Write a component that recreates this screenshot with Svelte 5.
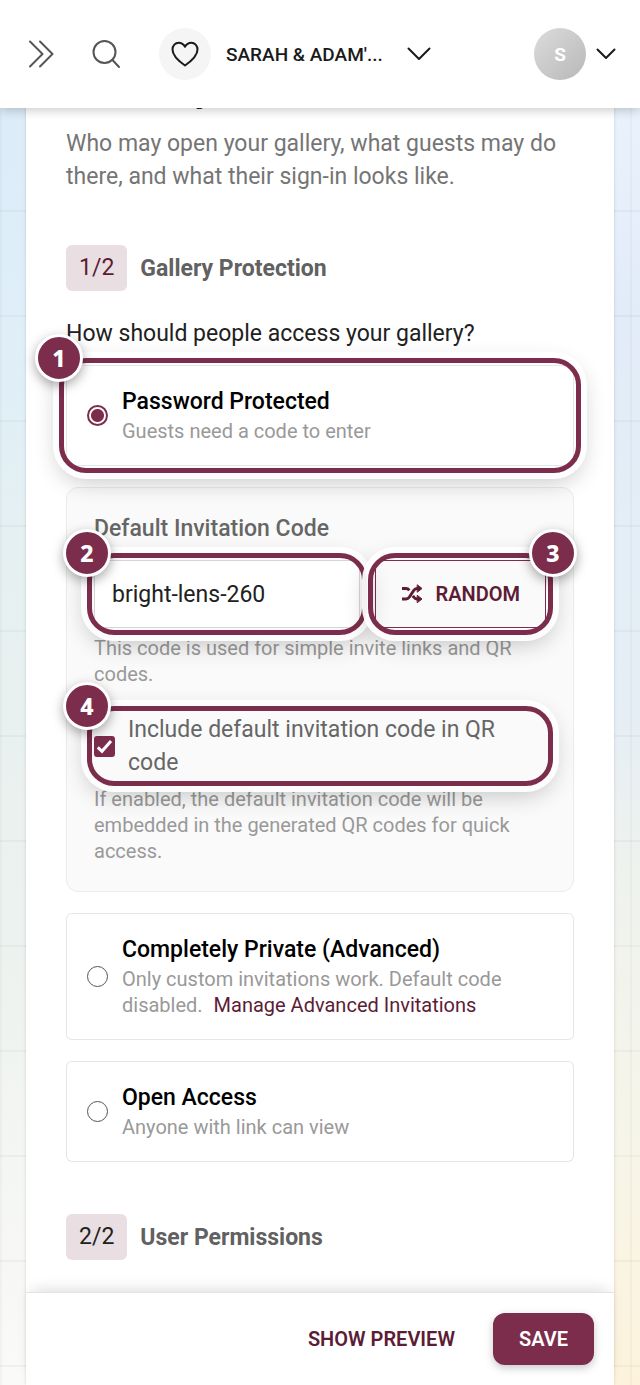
<script>
let access = $state('password');
let code = $state('bright-lens-260');
let includeCode = $state(true);

const words = ['bright', 'golden', 'quiet', 'happy', 'velvet'];
const things = ['lens', 'frame', 'flash', 'album', 'print'];

function pick(list) {
  return list[Math.floor(Math.random() * list.length)];
}

function randomCode() {
  code = `${pick(words)}-${pick(things)}-${100 + Math.floor(Math.random() * 900)}`;
}
</script>

{#snippet marker(n, side)}
  <span class="ring" aria-hidden="true"></span>
  <span class="marker {side}">{n}</span>
{/snippet}

<div class="page">
  <header>
    <button class="icon menu" aria-label="Open menu">
      <svg width="28" height="28" viewBox="0 0 28 28"><path d="M2 1.500 14.500 14 2 26.500M12 1.500 24.500 14 12 26.500" /></svg>
    </button>
    <button class="icon search" aria-label="Search">
      <svg width="30" height="30" viewBox="0 0 30 30"><circle cx="13.500" cy="13" r="11" /><path d="m21.500 21 6.500 7" /></svg>
    </button>
    <button class="event">
      <span class="round">
        <svg width="28" height="26" viewBox="0 0 28 26"><path d="M14 24.500C9 21 1.500 15.500 1.500 8.500 1.500 4.500 4.300 1.700 7.700 1.700c2.700 0 4.900 1.400 6.300 4.100 1.400-2.700 3.600-4.100 6.300-4.100 3.400 0 6.200 2.800 6.200 6.800 0 7-7.500 12.500-12.500 16Z" /></svg>
      </span>
      <span class="name">SARAH &amp; ADAM'...</span>
      <svg width="24" height="14" viewBox="0 0 24 14"><path d="m1.500 1.500 10.500 10.500L22.500 1.500" /></svg>
    </button>
    <button class="account" aria-label="Account">
      <span class="avatar">S</span>
      <svg width="20" height="12" viewBox="0 0 20 12"><path d="m1.500 1.500 8.500 8.500 8.500-8.500" /></svg>
    </button>
  </header>

  <main>
    <div class="content">
      <h1>Security</h1>
      <p class="intro">Who may open your gallery, what guests may do there, and what their sign-in looks like.</p>

      <div class="step">
        <span class="count active">1/2</span>
        <h2>Gallery Protection</h2>
      </div>

      <p class="question" id="question">How should people access your gallery?</p>

      <div class="options" role="radiogroup" aria-labelledby="question">
        <div class="option marked">
          <input type="radio" id="password" name="access" value="password" bind:group={access} />
          <div class="text">
            <label for="password">Password Protected</label>
            <p class="hint">Guests need a code to enter</p>
          </div>
          {@render marker(1, 'left')}
        </div>

        <div class="code-box">
          <label class="code-label" for="code">Default Invitation Code</label>
          <div class="code-row">
            <div class="field marked">
              <input type="text" id="code" bind:value={code} />
              {@render marker(2, 'left')}
            </div>
            <div class="marked">
              <button class="random" onclick={randomCode}>
                <svg width="22" height="20" viewBox="0 0 22 20">
                  <path class="line" d="M1 4.500h4c1.500 0 2.500.7 3.300 1.800M11.800 11.800l.9 1.200c.9 1.300 1.800 2 3.300 2h2M1 15h4c1.500 0 2.500-.7 3.400-2l4.300-6.500c.9-1.300 1.800-2 3.300-2h2" />
                  <path class="tip" d="M16.500 1 21 4.500 16.500 8ZM16.500 11.500 21 15l-4.500 3.500Z" />
                </svg>
                RANDOM
              </button>
              {@render marker(3, 'right')}
            </div>
          </div>
          <p class="hint after">This code is used for simple invite links and QR codes.</p>

          <div class="check marked">
            <span class="box">
              <input type="checkbox" id="include" bind:checked={includeCode} />
              {#if includeCode}
                <svg width="21" height="21" viewBox="0 0 21 21"><path d="m3.800 11.300 4.200 4L17 5" /></svg>
              {/if}
            </span>
            <label for="include">Include default invitation code in QR code</label>
            {@render marker(4, 'left')}
          </div>
          <p class="hint after">If enabled, the default invitation code will be embedded in the generated QR codes for quick access.</p>
        </div>

        <div class="option">
          <input type="radio" id="private" name="access" value="private" bind:group={access} />
          <div class="text">
            <label for="private">Completely Private (Advanced)</label>
            <p class="hint">Only custom invitations work. Default code disabled. <a href="#invitations">Manage Advanced Invitations</a></p>
          </div>
        </div>

        <div class="option">
          <input type="radio" id="open" name="access" value="open" bind:group={access} />
          <div class="text">
            <label for="open">Open Access</label>
            <p class="hint">Anyone with link can view</p>
          </div>
        </div>
      </div>

      <div class="step">
        <span class="count">2/2</span>
        <h2>User Permissions</h2>
      </div>
    </div>

    <footer>
      <button class="preview">SHOW PREVIEW</button>
      <button class="save">SAVE</button>
    </footer>
  </main>
</div>

<style>
:global(body) {
  margin: 0;
}
.page {
  --plum: #7b2d4b;
  --plum-dark: #5c1c36;
  min-height: 100vh;
  display: flex;
  flex-direction: column;
  box-sizing: border-box;
  font-family: Roboto, "Liberation Sans", sans-serif;
  font-size: 23px;
  line-height: 33px;
  color: #212121;
  background:
    linear-gradient(rgba(60, 80, 90, .05) 2px, transparent 2px) 0 0 / 105px 105px,
    linear-gradient(90deg, rgba(60, 80, 90, .04) 2px, transparent 2px) 0 0 / 105px 105px,
    linear-gradient(#e9f2fc 8%, #e2ebf8 22%, #e3eef6 38%, #e6eef5 52%, #eef2ee 62%, #f7f5e8 84%, #fdf3dc) right / 50% 100% no-repeat,
    linear-gradient(#dcecf9 10%, #e0eff7 28%, #e6f0f0 42%, #edf2ef 70%, #f4f6f3 84%, #fafaf8);
}
button {
  font: inherit;
  color: inherit;
  border: 0;
  padding: 0;
  background: none;
  cursor: pointer;
}
svg {
  display: block;
  flex: none;
  fill: none;
  stroke: currentColor;
  stroke-width: 2;
  stroke-linecap: round;
  stroke-linejoin: round;
}
h1, h2, p {
  margin: 0;
}

header {
  position: sticky;
  top: 0;
  z-index: 10;
  height: 108px;
  box-sizing: border-box;
  padding: 0 24px 0 28px;
  display: flex;
  align-items: center;
  background: #fff;
  box-shadow: 0 2px 10px rgba(0, 0, 0, .22);
}
.icon {
  color: #555;
}
.search {
  margin-left: 35px;
}
.event {
  margin-left: 38px;
  display: flex;
  align-items: center;
  font-size: 19px;
  font-weight: 500;
  color: #1a1a1a;
}
.round,
.avatar {
  width: 52px;
  height: 52px;
  border-radius: 50%;
  display: flex;
  align-items: center;
  justify-content: center;
}
.round {
  background: #f5f5f5;
}
.name {
  margin: 0 24px 0 15px;
}
.account {
  margin-left: auto;
  display: flex;
  align-items: center;
  gap: 10px;
  color: #1a1a1a;
}
.avatar {
  font-size: 19px;
  font-weight: 700;
  color: #fff;
  background: linear-gradient(135deg, #dcdcdc, #b8b8b8);
}

main {
  flex: 1;
  margin: 0 26px;
  display: flex;
  flex-direction: column;
  background: #fff;
  box-shadow: 0 0 3px rgba(0, 0, 0, .15);
}
.content {
  flex: 1;
  padding: 0 40px 31px;
}
h1 {
  margin-top: -42px;
  padding-bottom: 17px;
  font-size: 40px;
  line-height: 44px;
  font-weight: 700;
}
.intro {
  color: #757575;
}
.step {
  margin-top: 52px;
  display: flex;
  align-items: center;
  gap: 13px;
}
.count {
  padding: 0 13px;
  line-height: 46px;
  border-radius: 6px;
  background: #e9dfe3;
}
.count.active {
  color: var(--plum-dark);
}
h2 {
  font-size: 23px;
  font-weight: 700;
  color: #616161;
}
.question {
  margin: 26px 0 15px;
}

.options {
  display: flex;
  flex-direction: column;
  gap: 21px;
}
.option {
  padding: 20px 21px;
  border-radius: 6px;
  box-shadow: inset 0 0 0 1px #e6e6e6;
  display: flex;
  align-items: center;
  gap: 14px;
  background: #fff;
}
.text {
  padding-bottom: 2px;
}
.option label {
  display: block;
  font-weight: 500;
  color: #000;
}
.hint {
  font-size: 20px;
  line-height: 26px;
  color: #999;
}
.hint a {
  margin-left: 6px;
  color: var(--plum-dark);
  text-decoration: none;
}
input[type="radio"],
input[type="checkbox"] {
  appearance: none;
  flex: none;
  width: 21px;
  height: 21px;
  margin: 0;
  box-sizing: border-box;
}
input[type="radio"] {
  border: 1px solid #555;
  border-radius: 50%;
}
input[type="radio"]:checked {
  border: 2px solid var(--plum);
  background: radial-gradient(circle, var(--plum) 6px, transparent 7px);
}

.code-box {
  padding: 27px;
  border: 1px solid #ebebeb;
  border-radius: 12px;
  background: #fafafa;
}
.code-label {
  display: block;
  line-height: 28px;
  font-weight: 500;
  color: #666;
}
.code-row {
  margin-top: 17px;
  display: flex;
  gap: 15px;
}
.field {
  flex: 1;
  min-width: 0;
}
.field input {
  width: 100%;
  height: 68px;
  box-sizing: border-box;
  padding: 0 17px;
  border: 1px solid #d5d5d5;
  border-radius: 6px;
  font: inherit;
  color: #212121;
  background: #fff;
}
.random {
  height: 68px;
  padding: 0 25px;
  display: flex;
  align-items: center;
  gap: 12px;
  border: 1px solid var(--plum);
  border-radius: 8px;
  font-size: 20px;
  font-weight: 600;
  color: var(--plum-dark);
}
.random .line {
  stroke-width: 3;
  stroke-linecap: butt;
}
.random .tip {
  fill: currentColor;
  stroke-width: 1;
}
.after {
  margin-top: 7px;
}
.check {
  margin-top: 26px;
  display: flex;
  align-items: center;
  gap: 13px;
  color: #666;
}
.box {
  display: grid;
}
.box > * {
  grid-area: 1 / 1;
}
.box svg {
  color: #fff;
  stroke-width: 3;
  stroke-linecap: butt;
  stroke-linejoin: miter;
  pointer-events: none;
}
input[type="checkbox"] {
  border: 2px solid #666;
  border-radius: 3px;
}
input[type="checkbox"]:checked {
  border-color: var(--plum);
  background: var(--plum);
}

.marked {
  position: relative;
}
.ring {
  position: absolute;
  z-index: 1;
  inset: -7px;
  border: 5px solid var(--plum);
  border-radius: 27px;
  box-shadow: 0 0 0 6px rgba(255, 255, 255, .93), 0 8px 24px rgba(0, 0, 0, .24);
  pointer-events: none;
}
.marker {
  position: absolute;
  z-index: 2;
  top: -31px;
  width: 42px;
  height: 42px;
  border: 3px solid #fff;
  border-radius: 50%;
  font: 800 23px/42px "Noto Sans", "Open Sans", sans-serif;
  text-align: center;
  color: #fff;
  background: var(--plum);
  box-shadow: 0 4px 12px rgba(0, 0, 0, .35);
}
.marker.left {
  left: -31px;
}
.marker.right {
  right: -31px;
}

footer {
  position: sticky;
  bottom: 0;
  z-index: 5;
  padding: 20px;
  display: flex;
  align-items: center;
  justify-content: flex-end;
  gap: 38px;
  border-top: 1px solid #e4e4e4;
  background: #fff;
  box-shadow: 0 -8px 14px -6px rgba(0, 0, 0, .14);
  font-size: 20px;
  font-weight: 600;
}
.preview {
  color: var(--plum-dark);
}
.save {
  height: 52px;
  padding: 0 26px;
  border-radius: 12px;
  color: #fff;
  background: var(--plum);
  box-shadow: 0 3px 8px rgba(0, 0, 0, .22);
}
</style>
